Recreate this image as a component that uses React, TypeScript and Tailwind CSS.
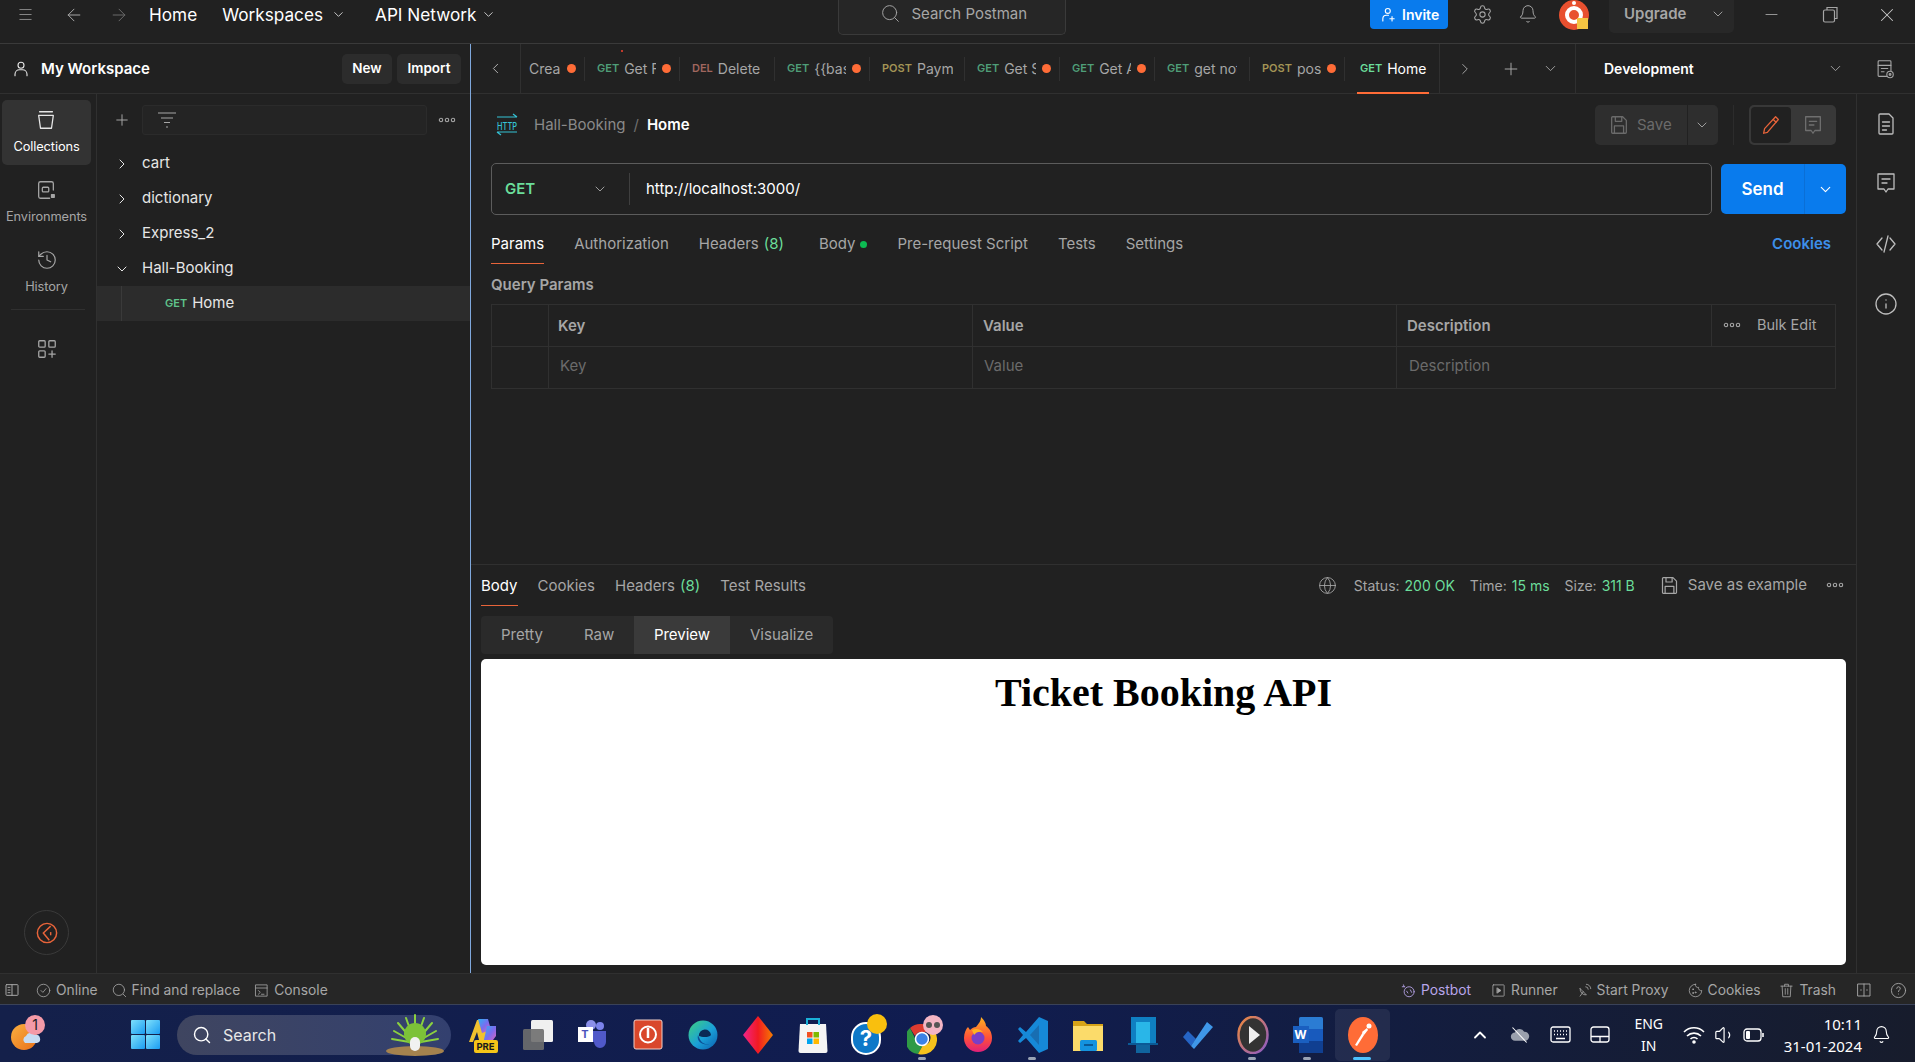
import React from "react";
import {
  Menu, ArrowLeft, ArrowRight, ChevronDown, ChevronLeft, ChevronRight, Plus, Search, Bell, Settings, Minus, X, Info, Globe, History, ChevronUp, Volume1,
} from "lucide-react";

const Dots = ({ c = "#a6a6a6" }: { c?: string }) => (
  <svg width="18" height="6" viewBox="0 0 18 6" fill="none" stroke={c} strokeWidth="1.1">
    <circle cx="3" cy="3" r="1.7" /><circle cx="9" cy="3" r="1.7" /><circle cx="15" cy="3" r="1.7" />
  </svg>
);

const Ico = ({ size = 20, c = "#a6a6a6", sw = 1.2, children }: { size?: number; c?: string; sw?: number; children: React.ReactNode }) => (
  <svg width={size} height={size} viewBox="0 0 24 24" fill="none" stroke={c} strokeWidth={sw} strokeLinecap="round" strokeLinejoin="round" className="shrink-0">{children}</svg>
);

const SaveIcon = ({ size = 20, c = "#a6a6a6" }: { size?: number; c?: string }) => (
  <Ico size={size} c={c} sw={1.4}><path d="M5 3h11l4 4v13a1 1 0 0 1-1 1H5a1 1 0 0 1-1-1V4a1 1 0 0 1 1-1z" /><path d="M8 3v5h7V3M7 21v-8h10v8" /></Ico>
);

const Method = ({ m }: { m: string }) => {
  const cls = m === "GET" ? "text-[#4f9e78]" : m === "POST" ? "text-[#a39455]" : "text-[#a0665e]";
  return <span className={`text-[11px] font-semibold mr-[5px] ${cls}`}>{m}</span>;
};

const tabs = [
  { m: "", t: "Crea", d: true, w: 64, mw: 32 },
  { m: "GET", t: "Get F", d: true, w: 95, mw: 32 },
  { m: "DEL", t: "Delete", d: false, w: 95, mw: 49 },
  { m: "GET", t: "{{bas", d: true, w: 95, mw: 32 },
  { m: "POST", t: "Paym", d: false, w: 95, mw: 36 },
  { m: "GET", t: "Get S", d: true, w: 95, mw: 32 },
  { m: "GET", t: "Get A", d: true, w: 95, mw: 32 },
  { m: "GET", t: "get not", d: false, w: 95, mw: 43 },
  { m: "POST", t: "pos", d: true, w: 95, mw: 32 },
];

function TabsRow() {
  return (
    <div className="h-[50px] border-b border-[#303030] flex items-stretch shrink-0 relative">
      <div className="w-[50px] border-r border-[#303030] flex items-center justify-center">
        <ChevronLeft size={17} color="#b0b0b0" strokeWidth={1.4} />
      </div>
      {tabs.map((t, i) => (
        <div key={i} style={{ width: t.w }} className="flex items-center relative pl-[12px]">
          {t.m && <Method m={t.m} />}
          <span style={{ maxWidth: t.mw }} className={`text-[14px] text-[#a6a6a6] overflow-hidden whitespace-nowrap ${i === 0 ? "ml-[-4px]" : ""}`}>{t.t}</span>
          {t.d && <span className="absolute right-[9px] w-[9px] h-[9px] rounded-full bg-[#ff6c37]" />}
          <span className="absolute right-0 top-[13px] h-[24px] w-px bg-[#303030]" />
        </div>
      ))}
      <span className="absolute left-[150px] top-[6px] w-[2px] h-[2px] bg-[#c0392b]" />
      <div className="w-[95px] flex items-center pl-[15px] relative border-r border-[#303030]">
        <span className="text-[11px] font-semibold mr-[5px] text-[#6bdd9a]">GET</span>
        <span className="text-[14px] text-white">Home</span>
        <span className="absolute left-[12px] right-[10px] -bottom-px h-[2px] bg-[#ff6c37]" />
      </div>
      <div className="w-[136px] border-r border-[#303030] flex items-center pl-[16px]">
        <ChevronRight size={18} color="#a6a6a6" strokeWidth={1.3} />
        <Plus size={20} color="#a6a6a6" strokeWidth={1.2} className="ml-[27px]" />
        <ChevronDown size={17} color="#a6a6a6" strokeWidth={1.3} className="ml-[21px]" />
      </div>
      <div className="flex-1 flex items-center pl-[28px] relative">
        <span className="text-[14px] font-semibold text-white">Development</span>
        <ChevronDown size={17} color="#a6a6a6" strokeWidth={1.3} className="ml-[133px]" />
        <span className="ml-[30px]">
          <Ico size={22}><rect x="4.5" y="3" width="14" height="17" rx="1" /><path d="M4.5 8h14M8 11.5h7M8 15h3" /><circle cx="17.5" cy="18" r="3.5" fill="#212121" /><circle cx="17.5" cy="18" r="1" /></Ico>
        </span>
      </div>
    </div>
  );
}

const Tree = ({ name, open }: { name: string; open?: boolean }) => (
  <div className="h-[35px] flex items-center pl-[17px] text-[15px] text-[#e6e6e6]">
    {open ? <ChevronDown size={16} color="#e6e6e6" strokeWidth={1.5} /> : <ChevronRight size={16} color="#e6e6e6" strokeWidth={1.5} />}
    <span className="ml-[12px]">{name}</span>
  </div>
);

const RailItem = ({ label, active, children }: { label: string; active?: boolean; children: React.ReactNode }) => (
  <div className={`mx-[2px] w-[89px] h-[65px] rounded-[5px] flex flex-col items-center justify-center ${active ? "bg-[#333333]" : ""} mb-[5px]`}>
    {children}
    <span className={`mt-[6px] text-[12.8px] tracking-[-0.1px] ${active ? "text-white" : "text-[#a6a6a6]"}`}>{label}</span>
  </div>
);

function Sidebar() {
  return (
    <div className="w-[471px] shrink-0 border-r border-[#7fa8dc] flex flex-col">
      <div className="h-[50px] border-b border-[#303030] flex items-center pl-[12px] shrink-0">
        <Ico size={18} c="#e6e6e6" sw={1.5}><circle cx="12" cy="7" r="4" /><path d="M4 21v-2a6 6 0 0 1 6-6h4a6 6 0 0 1 6 6v2" /></Ico>
        <span className="ml-[11px] mt-[1px] text-[15px] font-semibold text-white">My Workspace</span>
        <span className="ml-auto h-[30px] w-[50px] rounded-[5px] bg-[#2c2c2c] flex items-center justify-center text-[13.5px] font-semibold text-white">New</span>
        <span className="ml-[5px] mr-[9px] h-[30px] w-[64px] rounded-[5px] bg-[#2c2c2c] flex items-center justify-center text-[13.5px] font-semibold text-white">Import</span>
      </div>
      <div className="flex-1 flex min-h-0">
        <div className="w-[97px] border-r border-[#303030] pt-[6px] flex flex-col shrink-0">
          <RailItem label="Collections" active>
            <span className="mr-[1px] flex"><Ico size={22} c="#e6e6e6" sw={1.4}><path d="M5 3h14M4 7h16l-2 14H6L4 7z" /></Ico></span>
          </RailItem>
          <RailItem label="Environments">
            <span className="mr-[2px] flex"><Ico size={22} c="#a6a6a6" sw={1.4}><path d="M20 12V5a2 2 0 0 0-2-2H6a2 2 0 0 0-2 2v14a2 2 0 0 0 2 2h10" /><rect x="8" y="9" width="7" height="5" rx="1" /><rect x="18" y="17" width="3" height="3" fill="#a6a6a6" /></Ico></span>
          </RailItem>
          <RailItem label="History">
            <History size={22} color="#a6a6a6" strokeWidth={1.3} />
          </RailItem>
          <div className="mx-[11px] h-px bg-[#303030] mt-[-1px]" />
          <div className="flex justify-center mt-[28px] pr-[3px]">
            <Ico size={22} c="#a6a6a6" sw={1.4}><rect x="3" y="3" width="7" height="7" rx="1" /><rect x="14" y="3" width="7" height="7" rx="1" /><rect x="3" y="14" width="7" height="7" rx="1" /><path d="M17.5 14v7M14 17.5h7" /></Ico>
          </div>
          <div className="mt-auto mb-[18px] ml-[24px] w-[45px] h-[45px] rounded-full border border-[#3a3a3a] flex items-center justify-center">
            <svg width="22" height="22" viewBox="0 0 24 24" fill="none" stroke="#e8643a" strokeWidth="1.6"><circle cx="12" cy="12" r="10.500" /><path d="M16 4.500L8 12l6.500 8" /><path d="M16 11v3.500" /></svg>
          </div>
        </div>
        <div className="flex-1 flex flex-col min-w-0">
          <div className="h-[41px] mt-[11px] flex items-start pl-[16px] shrink-0">
            <Plus size={18} color="#a6a6a6" strokeWidth={1.3} className="mt-[6px]" />
            <div className="ml-[11px] w-[285px] h-[30px] rounded-[3px] border border-[#2b2b2b] bg-[#242424] flex items-center pl-[14px]">
              <svg width="20" height="18" viewBox="0 0 20 18" fill="none" stroke="#a6a6a6" strokeWidth="1.2"><path d="M1 2h18M4 7h12M7 11.5h6M9 16h2" /></svg>
            </div>
            <span className="ml-[11px] mt-[12px] flex"><Dots /></span>
          </div>
          <div>
            <Tree name="cart" />
            <Tree name="dictionary" />
            <Tree name="Express_2" />
            <Tree name="Hall-Booking" open />
            <div className="h-[35px] bg-[#2c2c2c] flex items-center relative pl-[68px]">
              <span className="absolute left-[24px] top-0 bottom-0 w-px bg-[#3a3a3a]" />
              <span className="text-[11px] font-semibold text-[#5fc48b] mr-[5px]">GET</span>
              <span className="text-[15px] text-[#e6e6e6]">Home</span>
            </div>
          </div>
        </div>
      </div>
    </div>
  );
}

const PTab = ({ children, active, ml = 0 }: { children: React.ReactNode; active?: boolean; ml?: number }) => (
  <div style={{ marginLeft: ml }} className={`h-full flex items-center text-[15px] relative whitespace-nowrap ${active ? "text-white" : "text-[#a6a6a6]"}`}>
    {children}
    {active && <span className="absolute left-0 right-0 bottom-0 h-[1.5px] bg-[#e8643a]" />}
  </div>
);

function Request() {
  return (
    <div className="flex-1 pl-[20px] min-h-0">
      <div className="h-[62px] flex items-center relative">
        <svg width="22" height="26" viewBox="0 0 22 26" fill="none" stroke="#35c3d6" strokeWidth="1.2" className="ml-[5px]">
          <path d="M1 5h20M17 2l4 3M1 20h20M1 20l4 3" />
          <text x="1" y="17.500" fontSize="11" fill="#35c3d6" stroke="none" fontFamily="Inter" fontWeight="500" textLength="20" lengthAdjust="spacingAndGlyphs">HTTP</text>
        </svg>
        <span className="ml-[16px] text-[15px] text-[#8a8a8a]">Hall-Booking</span>
        <span className="ml-[8px] text-[15px] text-[#6f6f6f]">/</span>
        <span className="ml-[8px] text-[15px] font-semibold text-white">Home</span>
        <div className="ml-auto mr-[20px] flex items-center">
          <div className="h-[40px] w-[92px] rounded-l-[5px] bg-[#2e2e2e] flex items-center pl-[13px]">
            <SaveIcon size={22} c="#6b6b6b" />
            <span className="ml-[7px] text-[15px] text-[#6b6b6b]">Save</span>
          </div>
          <div className="ml-px h-[40px] w-[30px] rounded-r-[5px] bg-[#2e2e2e] flex items-center justify-center pr-[2px]">
            <ChevronDown size={16} color="#a6a6a6" strokeWidth={1.4} />
          </div>
          <div className="mx-[15px] w-px h-[40px] bg-[#2c2c2c]" />
          <div className="h-[40px] w-[87px] rounded-[5px] bg-[#383838] flex items-center p-[2px]">
            <div className="w-[40px] h-[36px] rounded-[4px] bg-[#212121] flex items-center justify-center">
              <Ico size={22} c="#e8643a" sw={1.4}><path d="M17 3l3 3L8 20l-4 1 1-5L17 3z" /><path d="M14.500 6l3 3" /></Ico>
            </div>
            <div className="flex-1 flex items-center justify-center">
              <Ico size={22} c="#6f6f6f" sw={1.4}><path d="M4 3h16v15h-6l-2 3-2-3H4V3z" /><path d="M8 8h8M8 12h5" /></Ico>
            </div>
          </div>
        </div>
      </div>
      <div className="mt-[7px] h-[52px] flex items-center pr-[10px]">
        <div className="flex-1 h-[52px] rounded-[5px] border border-[#5c5c5c] flex items-center">
          <div className="w-[138px] flex items-center h-[32px] border-r border-[#3f3f3f] pl-[13px]">
            <span className="text-[15px] font-semibold text-[#6bdd9a]">GET</span>
            <ChevronDown size={16} color="#a6a6a6" strokeWidth={1.4} className="ml-[57px]" />
          </div>
          <span className="ml-[16px] text-[15px] text-white">http://localhost:3000/</span>
        </div>
        <div className="ml-[9px] h-[50px] w-[125px] rounded-[5px] bg-[#097bed] flex">
          <div className="w-[84px] flex items-center justify-center border-r border-[#0a6fd6] text-[17px] font-semibold text-white pt-[1px]">Send</div>
          <div className="flex-1 flex items-center justify-center"><ChevronDown size={17} color="#fff" strokeWidth={1.6} /></div>
        </div>
      </div>
      <div className="mt-[10px] h-[39px] flex pr-[25px]">
        <PTab active>Params</PTab>
        <PTab ml={30}>Authorization</PTab>
        <PTab ml={30}>Headers<span className="ml-[5px] text-[#6bdd9a]">(8)</span></PTab>
        <PTab ml={35}>Body<span className="ml-[5px] w-[7px] h-[7px] rounded-full bg-[#0cbb52]" /></PTab>
        <PTab ml={30}>Pre-request Script</PTab>
        <PTab ml={30}>Tests</PTab>
        <PTab ml={30}>Settings</PTab>
        <span className="ml-auto h-full flex items-center text-[15px] font-semibold text-[#3d8fea]">Cookies</span>
      </div>
      <div className="h-[40px] flex items-center pt-[2px] text-[15px] font-semibold text-[#a6a6a6]">Query Params</div>
      <div className="w-[1345px] border border-[#303030] text-[15px]">
        <div className="h-[42px] flex border-b border-[#303030] font-semibold text-[#a6a6a6]">
          <div className="w-[57px] border-r border-[#303030]" />
          <div className="w-[424px] border-r border-[#303030] flex items-center pl-[9px] pt-[2px]">Key</div>
          <div className="w-[424px] border-r border-[#303030] flex items-center pl-[10px] pt-[2px]">Value</div>
          <div className="w-[315px] border-r border-[#303030] flex items-center pl-[10px] pt-[2px]">Description</div>
          <div className="flex-1 flex items-center pl-[11px] pb-[1px] font-normal">
            <Dots />
            <span className="ml-[16px] text-[14.5px]">Bulk Edit</span>
          </div>
        </div>
        <div className="h-[41px] flex text-[#6b6b6b]">
          <div className="w-[57px] border-r border-[#303030]" />
          <div className="w-[424px] border-r border-[#303030] flex items-center pl-[11px] pb-[3px]">Key</div>
          <div className="w-[424px] border-r border-[#303030] flex items-center pl-[11px] pb-[3px]">Value</div>
          <div className="flex-1 flex items-center pl-[12px] pb-[3px]">Description</div>
        </div>
      </div>
    </div>
  );
}

function Response() {
  return (
    <div className="h-[409px] shrink-0 border-t border-[#303030] pl-[10px] pr-[10px] flex flex-col">
      <div className="h-[41px] pt-px flex shrink-0">
        <PTab active>Body</PTab>
        <PTab ml={20}>Cookies</PTab>
        <PTab ml={20}>Headers<span className="ml-[5px] text-[#6bdd9a]">(8)</span></PTab>
        <PTab ml={20}>Test Results</PTab>
        <div className="ml-auto mr-[2px] pb-[2px] flex items-center text-[14px] text-[#a6a6a6] whitespace-nowrap">
          <Globe size={19} color="#a6a6a6" strokeWidth={1.1} />
          <span className="ml-[17px]">Status:</span><span className="ml-[5px] text-[#6bdd9a]">200 OK</span>
          <span className="ml-[15px]">Time:</span><span className="ml-[5px] text-[#6bdd9a]">15 ms</span>
          <span className="ml-[15px]">Size:</span><span className="ml-[5px] text-[#6bdd9a]">311 B</span>
          <span className="ml-[24px]"><SaveIcon size={21} /></span>
          <span className="ml-[8px] text-[15px]">Save as example</span>
          <span className="ml-[19px] flex"><Dots /></span>
        </div>
      </div>
      <div className="mt-[10px] h-[38px] w-[352px] rounded-[4px] bg-[#2a2a2a] flex text-[15px] text-[#a6a6a6] overflow-hidden shrink-0">
        <div className="w-[103px] flex items-center pl-[20px]">Pretty</div>
        <div className="w-[50px] flex items-center">Raw</div>
        <div className="w-[96px] flex items-center justify-center bg-[#3a3a3a] text-white">Preview</div>
        <div className="flex-1 flex items-center pl-[20px]">Visualize</div>
      </div>
      <div className="mt-[5px] h-[306px] rounded-[5px] bg-white shrink-0 flex justify-center">
        <h1 className="mt-[11px] text-[40px] leading-[46px] font-bold text-black font-['Liberation_Serif',serif]">Ticket Booking API</h1>
      </div>
    </div>
  );
}

function RightRail() {
  return (
    <div className="w-[59px] shrink-0 border-l border-[#303030] flex flex-col items-center pt-[18px]">
      <Ico size={24} c="#bdbdbd" sw={1.3}><path d="M6 2h9l4 4v15a1 1 0 0 1-1 1H6a1 1 0 0 1-1-1V3a1 1 0 0 1 1-1z" /><path d="M8.500 10h7M8.500 14h7M8.500 18h4" /></Ico>
      <span className="mt-[35px]"><Ico size={24} c="#bdbdbd" sw={1.3}><path d="M4 3h16v15h-6l-2 3-2-3H4V3z" /><path d="M8 8h8M8 12h5" /></Ico></span>
      <span className="mt-[37px]"><Ico size={24} c="#bdbdbd" sw={1.3}><path d="M8 6l-5 6 5 6M16 6l5 6-5 6M14 4l-4 16" /></Ico></span>
      <span className="mt-[36px]"><Info size={24} color="#bdbdbd" strokeWidth={1.3} /></span>
    </div>
  );
}

const SItem = ({ label, ml, c = "#a6a6a6", children }: { label?: string; ml: number; c?: string; children: React.ReactNode }) => (
  <span style={{ marginLeft: ml, color: c }} className="flex items-center whitespace-nowrap">
    {children}
    {label && <span className="ml-[5px]">{label}</span>}
  </span>
);

function StatusBar() {
  return (
    <div className="h-[31px] shrink-0 bg-[#262626] border-t border-[#303030] flex items-center text-[13.8px] pl-[4px] pt-[2px]">
      <SItem ml={0}><Ico size={16} sw={1.5}><rect x="3" y="4" width="18" height="16" rx="1" /><path d="M12 4v16M6 8h3M6 12h3M6 16h3" /></Ico></SItem>
      <SItem ml={16} label="Online"><Ico size={15} sw={1.3}><circle cx="12" cy="12" r="10" /><path d="M8 12l3 3 5-6" /></Ico></SItem>
      <SItem ml={14} label="Find and replace"><Ico size={15} sw={1.3}><circle cx="11" cy="11" r="9" /><path d="M18 18l4 4" /></Ico></SItem>
      <SItem ml={14} label="Console"><Ico size={15} sw={1.3}><rect x="3" y="3" width="18" height="18" /><path d="M3 8h18M7 12l3 3-3 3M12 18h4" /></Ico></SItem>
      <div className="ml-auto flex items-center pr-[8px]">
        <SItem ml={0} c="#b8a5ea" label="Postbot"><Ico size={15} c="#b8a5ea" sw={1.4}><circle cx="13" cy="14" r="8" /><path d="M9 13l2 3M15 11l2 4M4 3l1 3M2 6h4" /></Ico></SItem>
        <SItem ml={20} label="Runner"><Ico size={15} sw={1.3}><rect x="3" y="3" width="18" height="18" rx="1" /><path d="M10 8l6 4-6 4z" fill="#a6a6a6" /></Ico></SItem>
        <SItem ml={19} label="Start Proxy"><Ico size={15} sw={1.3}><path d="M5 9a9 9 0 0 0 10 10L5 9z" /><path d="M10 14l-5 7M14 6a4 4 0 0 1 4 4M15 2a7 7 0 0 1 7 7" /></Ico></SItem>
        <SItem ml={19} label="Cookies"><Ico size={15} sw={1.3}><path d="M12 2a10 10 0 1 0 10 10 4 4 0 0 1-5-5 4 4 0 0 1-5-5z" /><circle cx="8" cy="10" r=".8" /><circle cx="12" cy="15" r=".8" /><circle cx="8" cy="16" r=".8" /></Ico></SItem>
        <SItem ml={19} label="Trash"><Ico size={15} sw={1.3}><path d="M3 5h18M9 5V2h6v3M5 5l1 17h12l1-17M10 9v9M14 9v9" /></Ico></SItem>
        <SItem ml={20}><Ico size={16} sw={1.4}><rect x="3" y="3" width="18" height="18" /><path d="M12 3v18M7 12h1M16 12h1" /></Ico></SItem>
        <SItem ml={18}><Ico size={17} sw={1.3}><circle cx="12" cy="12" r="10" /><path d="M9.500 9a2.500 2.500 0 1 1 3.500 2.500c-.8.4-1 1-1 2" /><path d="M12 17h.01" /></Ico></SItem>
      </div>
    </div>
  );
}

const Slot = ({ children, run, active }: { children: React.ReactNode; run?: boolean; active?: boolean }) => (
  <div className={`w-[55px] h-[52px] flex items-center justify-center relative rounded-[5px] ${active ? "bg-[#ffffff12]" : ""}`}>
    {children}
    {run && <span className="absolute bottom-[1px] left-[23px] w-[8px] h-[3px] rounded-full bg-[#9aa3b5]" />}
    {active && <span className="absolute bottom-[1px] left-[18px] w-[18px] h-[3px] rounded-full bg-[#4cc2ff]" />}
  </div>
);

const WinLogo = () => (
  <svg width="29" height="29" viewBox="0 0 29 29">
    <defs><linearGradient id="w" x1="0" y1="0" x2="1" y2="1"><stop offset="0" stopColor="#7ee0fb" /><stop offset="1" stopColor="#1a9cf2" /></linearGradient></defs>
    <rect x="0" y="0" width="14" height="14" rx="1" fill="url(#w)" /><rect x="15" y="0" width="14" height="14" rx="1" fill="url(#w)" />
    <rect x="0" y="15" width="14" height="14" rx="1" fill="url(#w)" /><rect x="15" y="15" width="14" height="14" rx="1" fill="url(#w)" />
  </svg>
);

function Taskbar() {
  return (
    <div className="h-[58px] shrink-0 bg-gradient-to-r from-[#14204a] via-[#101c50] to-[#171c2c] border-t border-[#3a4258] flex items-center pt-[2px] text-white">
      <div className="w-[46px] ml-[3px] h-[50px] relative flex items-center justify-center">
        <svg width="30" height="36" viewBox="0 0 30 36">
          <defs><linearGradient id="sun" x1="0" y1="0" x2="1" y2="1"><stop offset="0" stopColor="#fbb040" /><stop offset="1" stopColor="#e8701a" /></linearGradient></defs>
          <circle cx="13" cy="20" r="13" fill="url(#sun)" />
          <path d="M14 26a4 4 0 0 1 1-7 5 5 0 0 1 9-1 4 4 0 0 1 2 8z" fill="#c7dcf3" />
        </svg>
        <span className="absolute left-[22px] top-[5px] w-[20px] h-[20px] rounded-full bg-[#f49aa8] text-[#1c1c1c] text-[14px] leading-[20px] text-center font-['Inter']">1</span>
      </div>
      <div className="ml-[82px]"><WinLogo /></div>
      <div className="ml-[17px] w-[274px] h-[40px] rounded-full bg-gradient-to-r from-[#3f4560] to-[#33406f] flex items-center pl-[15px] relative">
        <Search size={20} color="#fff" strokeWidth={1.7} />
        <span className="ml-[11px] text-[16px] text-[#e8e8e8]">Search</span>
        <svg width="62" height="46" viewBox="0 0 62 46" className="absolute right-[5px] top-[-4px]">
          <ellipse cx="31" cy="40" rx="29" ry="5" fill="#a5824e" />
          <g stroke="#8bd13f" strokeWidth="2" strokeLinecap="round">
            <path d="M31 32L8 28M31 32L10 20M31 32L14 12M31 32L22 7M31 32L31 4M31 32L40 7M31 32L48 12M31 32L52 20M31 32L54 28" />
          </g>
          <circle cx="31" cy="23" r="11" fill="#7cc238" />
          <rect x="26" y="26" width="10" height="14" rx="5" fill="#f1f1f1" />
        </svg>
      </div>
      <div className="ml-[4px] flex items-center">
        <Slot>
          <div className="relative w-[30px] h-[34px]">
            <svg width="30" height="30" viewBox="0 0 30 30">
              <defs><linearGradient id="cp" x1="0" y1="0" x2="1" y2="1"><stop offset="0" stopColor="#2bb3f3" /><stop offset=".5" stopColor="#7a6cf0" /><stop offset="1" stopColor="#f062b0" /></linearGradient></defs>
              <path d="M9 2h9l5 24H12L9 14 5 24H1z" fill="#f2c12e" />
              <path d="M10 1h10l3 11-9 3z" fill="url(#cp)" />
              <path d="M19 8h9v10l-6 8h-7z" fill="url(#cp)" />
            </svg>
            <span className="absolute left-[6px] bottom-[-1px] w-[24px] h-[13px] rounded-[2px] bg-[#f5c518] text-[#1a1a1a] text-[9.5px] leading-[13px] text-center font-bold">PRE</span>
          </div>
        </Slot>
        <Slot>
          <svg width="30" height="30" viewBox="0 0 30 30"><rect x="8" y="0" width="22" height="22" rx="1.500" fill="#f0f0f0" /><rect x="0" y="9" width="21" height="21" rx="1.500" fill="#6e6e6e" opacity=".9" /></svg>
        </Slot>
        <Slot>
          <div className="relative w-[30px] h-[30px]">
            <svg width="30" height="30" viewBox="0 0 30 30"><circle cx="22" cy="6" r="4" fill="#7b83eb" /><circle cx="13" cy="5" r="5" fill="#8b8fe8" /><path d="M10 11h18v11a6 6 0 0 1-12 0h-6z" fill="#5059c9" /></svg>
            <span className="absolute left-0 top-[7px] w-[15px] h-[15px] bg-white text-[#4b53bc] text-[11px] leading-[15px] text-center font-bold">T</span>
          </div>
        </Slot>
        <Slot>
          <svg width="30" height="36" viewBox="0 0 30 36"><rect x="1" y="3" width="28" height="29" rx="2" fill="#d9472b" stroke="#f0d0c8" strokeWidth="1" /><circle cx="15" cy="17.500" r="8" fill="none" stroke="#fff" strokeWidth="2" /><path d="M15 11v10" stroke="#fff" strokeWidth="2.500" /></svg>
        </Slot>
        <Slot>
          <svg width="30" height="30" viewBox="0 0 30 30"><defs><linearGradient id="e" x1="0" y1="0" x2="1" y2="1"><stop offset="0" stopColor="#3fd07f" /><stop offset=".55" stopColor="#1aa0d8" /><stop offset="1" stopColor="#0c5fb0" /></linearGradient></defs><circle cx="15" cy="15" r="14.500" fill="url(#e)" /><path d="M11 16a6 6 0 0 1 12-1c-2 3-10 2-12 1z" fill="#0b2a55" /><path d="M10 15c-2 7 6 11 11 9-7 1-9-4-11-9z" fill="#0d4f95" /></svg>
        </Slot>
        <Slot>
          <svg width="30" height="38" viewBox="0 0 30 38"><defs><linearGradient id="d" x1="0" y1="0" x2="1" y2="0"><stop offset="0" stopColor="#f0248a" /><stop offset=".5" stopColor="#f21a22" /><stop offset="1" stopColor="#f57c00" /></linearGradient></defs><path d="M15 0l15 19-15 19L0 19z" fill="url(#d)" /></svg>
        </Slot>
        <Slot>
          <svg width="30" height="36" viewBox="0 0 30 36"><path d="M2 7h26l1.500 27a2 2 0 0 1-2 2h-25a2 2 0 0 1-2-2z" fill="#f4f4f4" /><path d="M9 8V2h12v6" fill="none" stroke="#1ab0d8" strokeWidth="2" /><rect x="9" y="15" width="5.500" height="5.500" fill="#f25022" /><rect x="15.500" y="15" width="5.500" height="5.500" fill="#7fba00" /><rect x="9" y="21.500" width="5.500" height="5.500" fill="#00a4ef" /><rect x="15.500" y="21.500" width="5.500" height="5.500" fill="#ffb900" /></svg>
        </Slot>
        <Slot>
          <div className="relative w-[38px] h-[40px] ml-[5px]">
            <span className="absolute left-[0px] top-[7px] w-[30px] h-[33px] rounded-full bg-[#0e78c8] border-[2px] border-white text-white text-[22px] leading-[29px] text-center font-bold">?</span>
            <span className="absolute left-[16px] top-[-1px] w-[20px] h-[20px] rounded-full bg-[#f9bf0e]" />
          </div>
        </Slot>
        <Slot run>
          <div className="relative w-[38px] h-[40px] ml-[7px]">
            <svg width="30" height="32" viewBox="0 0 30 32" className="absolute left-0 top-[8px]">
              <path d="M15 1a15 15 0 0 1 13 8H15a7 7 0 0 0-7 4L3 5a15 15 0 0 1 12-4z" fill="#dd3b30" />
              <path d="M3 5l6 12a7 7 0 0 0 7 5l-5 9A15 15 0 0 1 3 5z" fill="#2f9a45" />
              <path d="M28 9a15 15 0 0 1-17 22l5-9a7 7 0 0 0 4-13z" fill="#f6c21c" />
              <circle cx="15" cy="16" r="6.500" fill="#3b82e6" stroke="#fff" strokeWidth="1.500" />
            </svg>
            <span className="absolute left-[16px] top-[0px] w-[20px] h-[20px] rounded-full bg-[#f3b5c4] flex items-center justify-center">
              <svg width="14" height="6" viewBox="0 0 14 6"><circle cx="3" cy="3" r="3" fill="#555" /><circle cx="11" cy="3" r="3" fill="#555" /></svg>
            </span>
          </div>
        </Slot>
        <Slot>
          <svg width="30" height="38" viewBox="0 0 30 38"><defs><linearGradient id="f" x1="0" y1="0" x2="0" y2="1"><stop offset="0" stopColor="#ffb320" /><stop offset=".6" stopColor="#ff4f3a" /><stop offset="1" stopColor="#e0207a" /></linearGradient></defs><path d="M18 1c4 4 5 7 5 9 3 2 6 6 6 12a14 14 0 0 1-28 0c0-5 2-9 4-11l2 3c2-2 4-3 6-3 2-3 5-5 5-10z" fill="url(#f)" /><circle cx="15" cy="22" r="6.500" fill="#7b3ec6" /><path d="M9 14c4-2 8-1 11 2-4-1-7 0-9 3z" fill="#ffb320" /></svg>
        </Slot>
        <Slot run>
          <svg width="30" height="38" viewBox="0 0 30 38"><path d="M21 1l9 4v28l-9 4L8 22l-6 5-2-2 5-6-5-6 2-2 6 5z" fill="#1689d8" /><path d="M21 9L12 19l9 10z" fill="#211f40" opacity=".25" /></svg>
        </Slot>
        <Slot>
          <svg width="30" height="32" viewBox="0 0 30 32"><path d="M0 2h11l3 3h16v27H0z" fill="#d6a318" /><rect x="0" y="7" width="30" height="25" fill="#fbdb6a" /><rect x="7" y="21" width="17" height="11" rx="1.500" fill="#1493df" /><rect x="11" y="25" width="9" height="2" fill="#0b5a96" /></svg>
        </Slot>
        <Slot>
          <svg width="30" height="36" viewBox="0 0 30 36"><rect x="3" y="0" width="25" height="27" fill="#0f7fc2" /><rect x="8" y="5" width="14" height="31" fill="#29b6e8" /><rect x="8" y="27" width="14" height="9" fill="#10649e" /><rect x="0" y="26" width="30" height="2" fill="#0b5a96" /></svg>
        </Slot>
        <Slot>
          <svg width="30" height="30" viewBox="0 0 30 30"><path d="M0 17l5-6 8 8-5 7z" fill="#2564c4" /><path d="M8 26L24 2l6 5-19 22z" fill="#3f97e8" /></svg>
        </Slot>
        <Slot run>
          <svg width="32" height="38" viewBox="0 0 32 38"><defs><linearGradient id="p" x1="0" y1="0" x2="1" y2="1"><stop offset="0" stopColor="#f08a3a" /><stop offset="1" stopColor="#8a5ac8" /></linearGradient></defs><ellipse cx="16" cy="19" rx="14.500" ry="18" fill="#333" stroke="url(#p)" strokeWidth="2.500" /><path d="M12 10l11 9-11 9z" fill="#eee" /></svg>
        </Slot>
        <Slot run>
          <div className="relative w-[30px] h-[36px]">
            <svg width="30" height="36" viewBox="0 0 30 36"><rect x="6" y="0" width="24" height="36" rx="1.500" fill="#2b7cd3" /><rect x="6" y="12" width="24" height="12" fill="#185abd" /><rect x="6" y="24" width="24" height="12" fill="#103f91" /></svg>
            <span className="absolute left-0 top-[9px] w-[16px] h-[17px] bg-[#1a5fc0] text-[12px] leading-[17px] text-center font-bold text-white">W</span>
          </div>
        </Slot>
        <Slot active>
          <svg width="30" height="36" viewBox="0 0 30 36"><ellipse cx="15" cy="18" rx="15" ry="18" fill="#ff6c37" /><path d="M7 28l8-13 1 3-7 11z" fill="#fff" /><path d="M14 15l5-4 1 2-4 5z" fill="#fff" /><circle cx="21" cy="9" r="2.500" fill="#fff" /></svg>
        </Slot>
      </div>
      <div className="ml-auto flex items-center">
        <ChevronUp size={20} color="#fff" strokeWidth={2.2} />
        <svg width="20" height="20" viewBox="0 0 24 24" className="ml-[20px]"><path d="M6 19a5 5 0 0 1 0-10 6 6 0 0 1 11-1 5 5 0 0 1 1 11z" fill="#9aa0ad" /><path d="M3 3l17 18" stroke="#fff" strokeWidth="1.300" /></svg>
        <svg width="21" height="17" viewBox="0 0 21 17" fill="none" stroke="#fff" strokeWidth="1.300" className="ml-[20px]"><rect x="1" y="1" width="19" height="15" rx="2" /><path d="M4 5h1M7 5h1M10 5h1M13 5h1M16 5h1M4 8.500h1M7 8.500h1M10 8.500h1M13 8.500h1M16 8.500h1M6 12.500h9" /></svg>
        <svg width="20" height="17" viewBox="0 0 20 17" fill="none" stroke="#fff" strokeWidth="1.300" className="ml-[19px]"><rect x="1" y="1" width="18" height="15" rx="2.500" /><path d="M1 10.500h18M10 10.500V16" /></svg>
        <div className="ml-[17px] w-[44px] text-center text-[14px] leading-[22px] font-['Noto_Sans']">ENG<br />IN</div>
        <svg width="22" height="18" viewBox="0 0 22 18" fill="none" stroke="#fff" strokeWidth="1.600" className="ml-[12px]"><path d="M1 6a14 14 0 0 1 20 0M4 10a10 10 0 0 1 14 0M7.500 13a5 5 0 0 1 7 0" /><circle cx="11" cy="16" r="1" fill="#fff" /></svg>
        <Volume1 size={22} color="#fff" strokeWidth={1.3} className="ml-[9px]" />
        <svg width="21" height="14" viewBox="0 0 21 14" fill="none" stroke="#fff" strokeWidth="1.300" className="ml-[7px]"><rect x="1" y="1" width="17" height="12" rx="3" /><rect x="3" y="3" width="4" height="8" rx="1" fill="#fff" stroke="none" /><path d="M20 5v4" strokeWidth="1.600" /></svg>
        <div className="ml-[20px] text-right text-[15px] leading-[22px] font-['Noto_Sans']">10:11<br />31-01-2024</div>
        <Bell size={19} color="#fff" strokeWidth={1.4} className="ml-[10px] mr-[24px]" />
      </div>
    </div>
  );
}

function Header() {
  return (
    <div className="h-[44px] shrink-0 border-b border-[#3a3a3a] flex items-start relative">
      <div className="h-[29px] flex items-center pl-[17px]">
        <Menu size={17} color="#8f8f8f" strokeWidth={1.3} />
        <ArrowLeft size={20} color="#a6a6a6" strokeWidth={1.2} className="ml-[30px]" />
        <ArrowRight size={20} color="#6b6b6b" strokeWidth={1.2} className="ml-[25px]" />
        <span className="ml-[20px] text-[17.2px] text-white">Home</span>
        <span className="ml-[25px] text-[17.2px] text-white">Workspaces</span>
        <ChevronDown size={15} color="#d0d0d0" strokeWidth={1.5} className="ml-[8px]" />
        <span className="ml-[29px] text-[17.2px] text-white">API Network</span>
        <ChevronDown size={15} color="#d0d0d0" strokeWidth={1.5} className="ml-[5px]" />
      </div>
      <div className="ml-[342px] w-[228px] h-[35px] rounded-b-[5px] border border-t-0 border-[#3a3a3a] bg-[#262626] flex items-start pt-[3px] pl-[41px]">
        <Search size={21} color="#a6a6a6" strokeWidth={1.1} />
        <span className="ml-[10px] text-[15px] text-[#a6a6a6] leading-[21px]">Search Postman</span>
      </div>
      <div className="ml-auto flex items-start">
        <div className="h-[29px] w-[78px] rounded-b-[4px] bg-[#097bed] flex items-center pl-[10px] text-white text-[14px] font-semibold">
          <Ico size={17} c="#fff" sw={1.6}><circle cx="11" cy="7" r="3.500" /><path d="M4 21v-3a5 5 0 0 1 5-5h3M17 15v6M14 18h6" /></Ico>
          <span className="ml-[5px]">Invite</span>
        </div>
        <Settings size={21} color="#a6a6a6" strokeWidth={1.2} className="ml-[24px] mt-[4px]" />
        <Bell size={20} color="#a6a6a6" strokeWidth={1.2} className="ml-[25px] mt-[4px]" />
        <div className="ml-[21px] w-[30px] h-[30px] relative">
          <svg width="30" height="30" viewBox="0 0 30 30"><circle cx="15" cy="15" r="15" fill="#e8502f" /><circle cx="15" cy="15" r="7" fill="none" stroke="#fff" strokeWidth="4" /><rect x="18" y="18" width="11" height="11" fill="#f5c542" /><circle cx="15" cy="3" r="2" fill="#fff" /></svg>
        </div>
        <div className="ml-[20px] w-[125px] h-[33px] rounded-b-[5px] bg-[#282828] flex items-start pt-[3px] pl-[15px] text-[15px] font-semibold text-[#a6a6a6]">
          Upgrade
          <ChevronDown size={16} color="#a6a6a6" strokeWidth={1.4} className="ml-auto mr-[8px] mt-[3px]" />
        </div>
        <div className="h-[29px] flex items-center">
          <Minus size={19} color="#a6a6a6" strokeWidth={1.1} className="ml-[28px]" />
          <svg width="17" height="17" viewBox="0 0 17 17" fill="none" stroke="#a6a6a6" strokeWidth="1.200" className="ml-[41px]"><rect x="1.500" y="4" width="11" height="12" rx="1.500" /><path d="M5 4V1.500h10v11h-2.500" /></svg>
          <X size={22} color="#c8c8c8" strokeWidth={1.1} className="ml-[37px] mr-[17px]" />
        </div>
      </div>
    </div>
  );
}

export default function App() {
  return (
    <div className="w-[1915px] h-[1062px] overflow-hidden flex flex-col bg-[#212121] font-['Inter',sans-serif]">
      <Header />
      <div className="flex-1 flex min-h-0">
        <Sidebar />
        <div className="flex-1 flex flex-col min-w-0">
          <TabsRow />
          <div className="flex-1 flex min-h-0">
            <div className="flex-1 flex flex-col min-w-0">
              <Request />
              <Response />
            </div>
            <RightRail />
          </div>
        </div>
      </div>
      <StatusBar />
      <Taskbar />
    </div>
  );
}
